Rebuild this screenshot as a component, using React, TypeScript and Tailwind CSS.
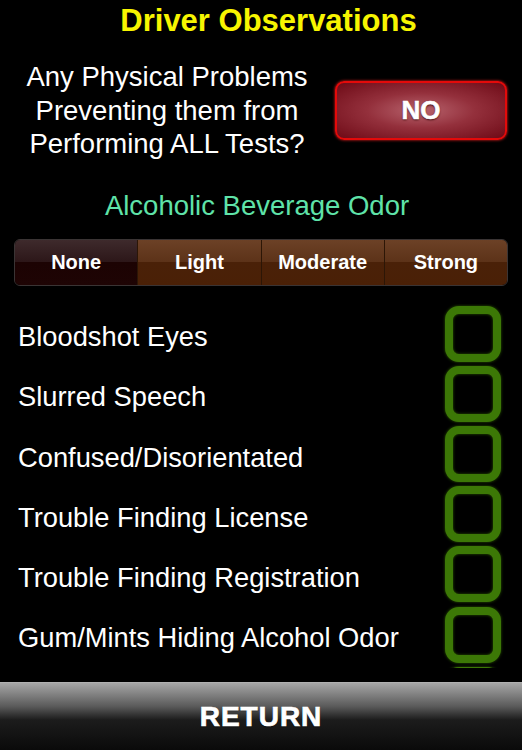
const observations = [
    "Bloodshot Eyes",
    "Slurred Speech",
    "Confused/Disorientated",
    "Trouble Finding License",
    "Trouble Finding Registration",
    "Gum/Mints Hiding Alcohol Odor",
    "",
];

const odorLevels = ["None", "Light", "Moderate", "Strong"];

function CheckBox() {
    return (
        <div className="w-[56px] h-[56px] rounded-[14px] border-[8px] border-[#3c7806] shadow-[0_0_3px_#2c5a02,inset_0_0_3px_#2c5a02] bg-black" />
    );
}

export default function App() {
    return (
        <div className="h-[750px] w-[522px] bg-black flex flex-col font-['Liberation_Sans',Arial,sans-serif] text-white overflow-hidden">
            <div className="text-center pl-[15px] text-[31px] leading-[36px] font-bold text-[#f7f500] pt-[3px]">
                Driver Observations
            </div>

            <div className="flex items-center mt-[21px]">
                <div className="w-[334px] text-center text-[27.5px] leading-[33.5px]">
                    Any Physical Problems<br />
                    Preventing them from<br />
                    Performing ALL Tests?
                </div>
                <button className="ml-[1px] w-[172px] h-[59px] rounded-[9px] border-2 border-[#e40a0a] shadow-[0_0_3px_#ff2020] bg-[radial-gradient(ellipse_at_center,#b8646e_0%,#94303c_45%,#6e0a16_100%)] text-[26px] font-bold text-white [-webkit-text-stroke:0.6px_white] [text-shadow:0_1px_2px_#300]">
                    NO
                </button>
            </div>

            <div className="text-center pr-[8px] text-[27.5px] leading-[34px] text-[#5fe3a9] mt-[28px]">
                Alcoholic Beverage Odor
            </div>

            <div className="mx-[14px] mt-[16px] h-[47px] flex rounded-[6px] overflow-hidden border border-[#3a3434]">
                {odorLevels.map((level, i) => (
                    <div
                        key={level}
                        className={`flex-1 flex items-center justify-center text-[20px] font-bold ${i > 0 ? "border-l border-[#2c1606]" : ""} ${i === 0 ? "bg-[linear-gradient(#3e2a2c,#2c1618_50%,#1c0303_50%,#1e0404)]" : "bg-[linear-gradient(#6c4126,#5c3218_50%,#4a2108_50%,#4a2006)]"}`}
                    >
                        {level}
                    </div>
                ))}
            </div>

            <div className="mt-[18px] h-[364px] overflow-hidden">
                {observations.map((item, i) => (
                    <div key={i} className="h-[60.2px] flex items-center justify-between pl-[18px] pr-[21px]">
                        <span className="text-[27.3px] pt-[8px]">{item}</span>
                        <CheckBox />
                    </div>
                ))}
            </div>

            <div className="mt-auto h-[68px] flex items-center justify-center border-t border-[#b0b0b0] bg-[linear-gradient(#a6a6a6,#5a5a5a_35%,#1c1c1c_55%,#0a0a0a)]">
                <span className="text-[28px] font-bold tracking-[1px] text-white [-webkit-text-stroke:0.7px_white] [text-shadow:0_1px_1px_#000]">
                    RETURN
                </span>
            </div>
        </div>
    );
}
